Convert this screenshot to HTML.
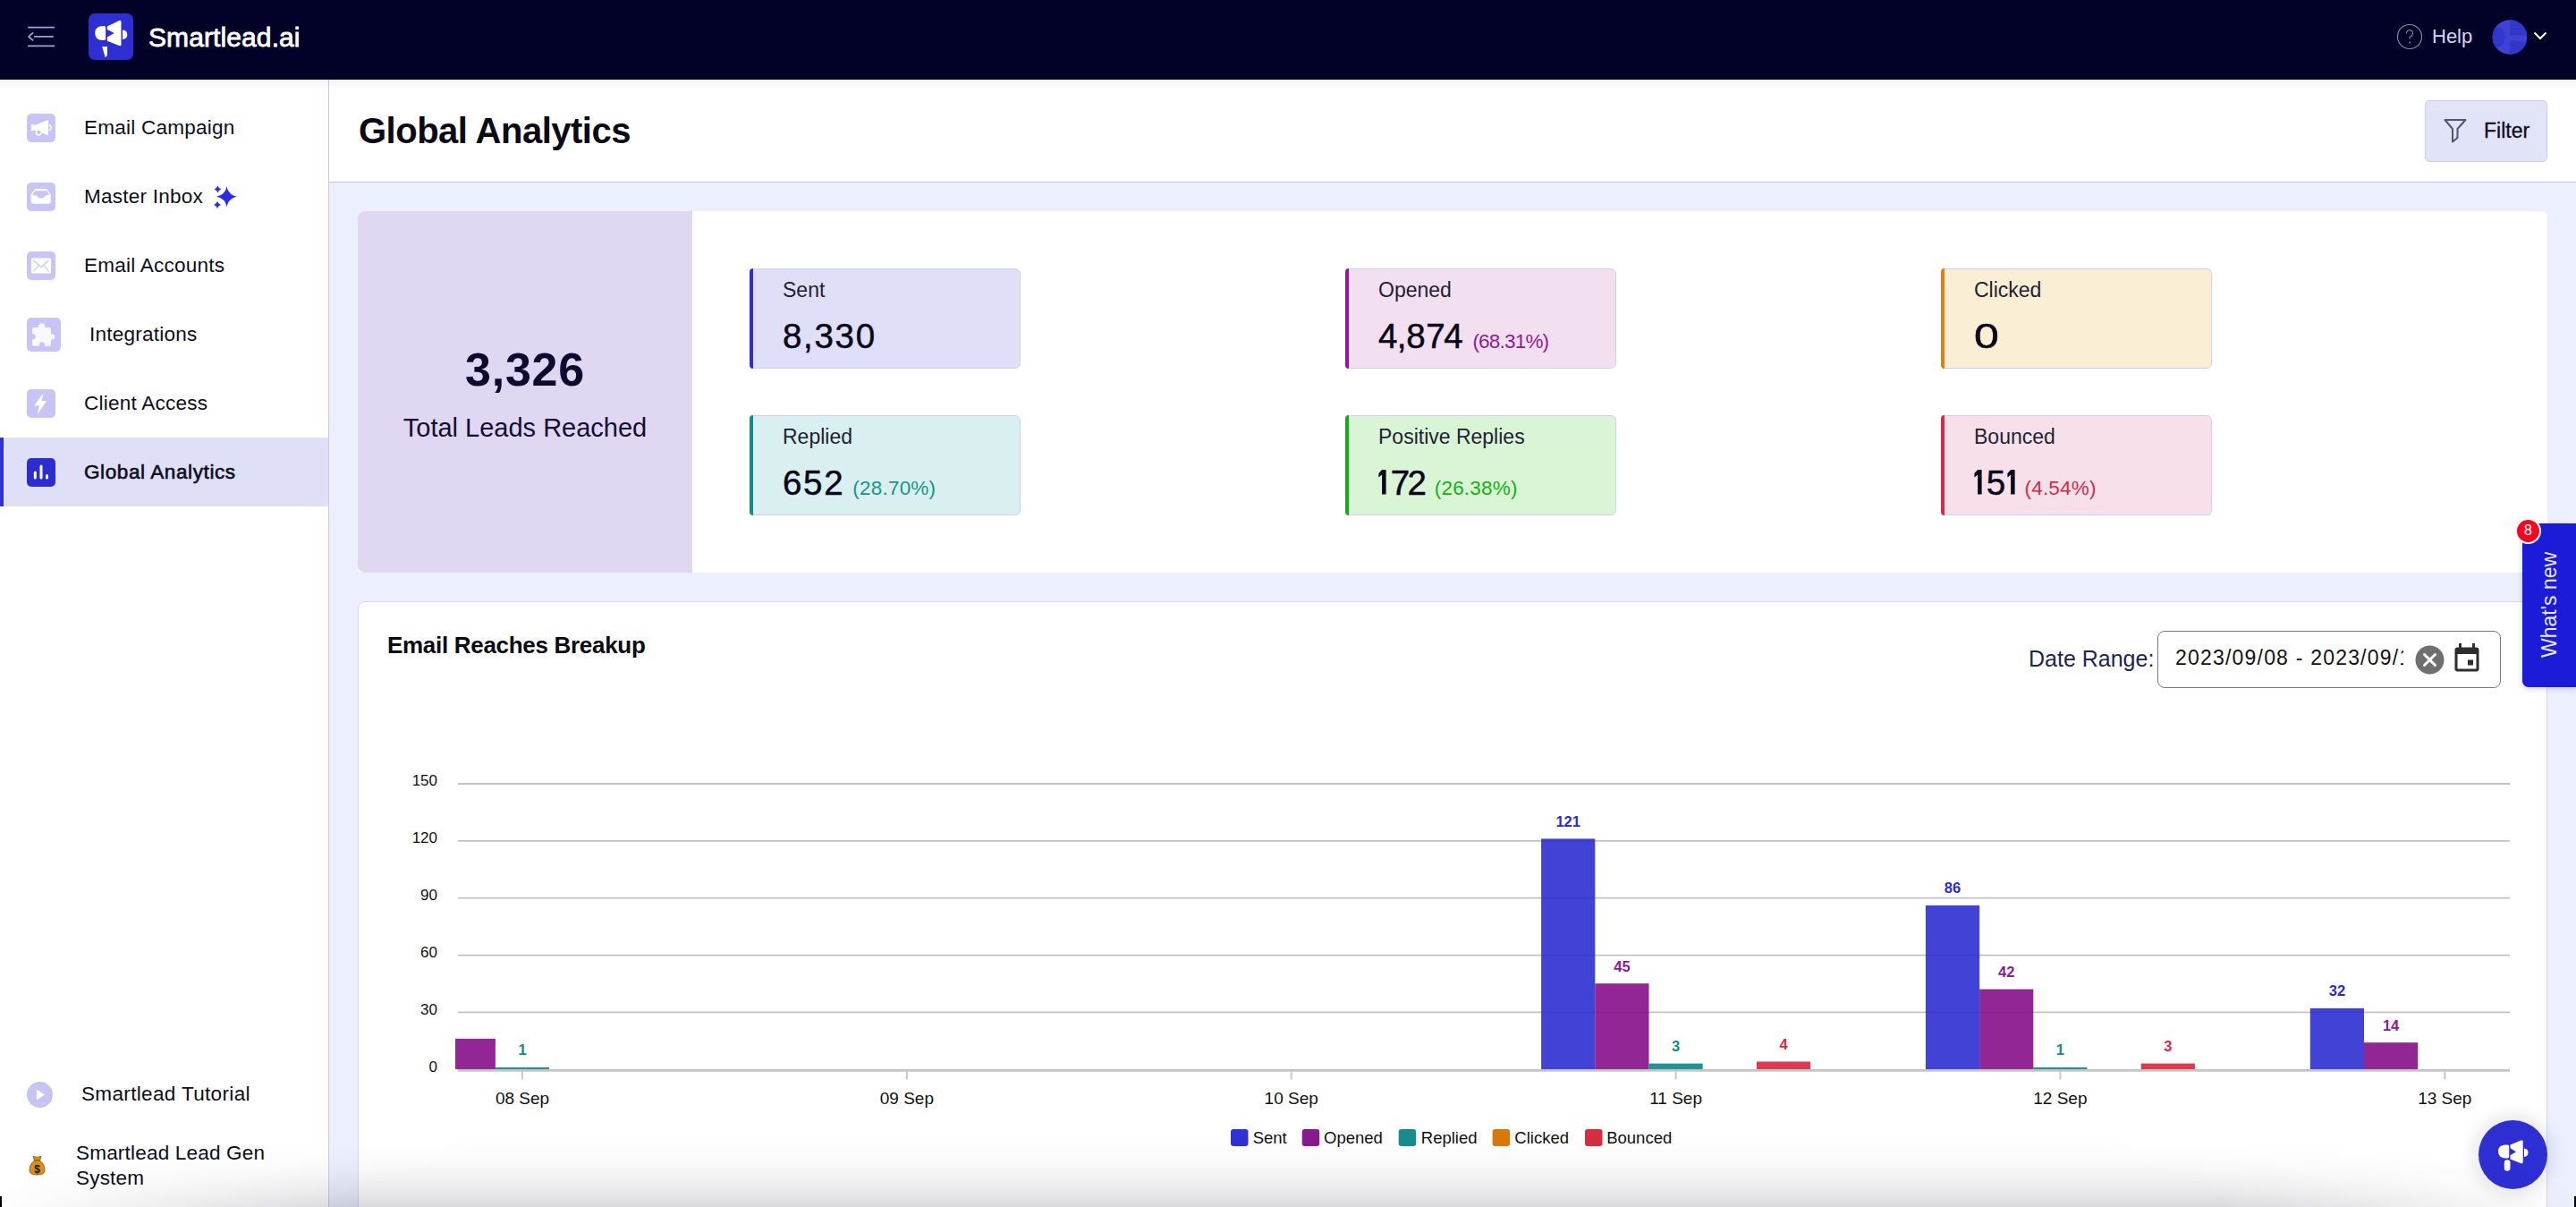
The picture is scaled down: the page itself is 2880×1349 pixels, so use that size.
<!DOCTYPE html>
<html><head><meta charset="utf-8">
<style>
*{box-sizing:border-box;margin:0;padding:0}
html,body{width:2880px;height:1349px;overflow:hidden}
body{position:relative;background:#eceffd;font-family:"Liberation Sans",sans-serif;color:#0c0c1a}
.abs{position:absolute}
#top{left:0;top:0;width:2880px;height:89px;background:#020228}
#side{left:0;top:89px;width:368px;height:1260px;background:#fff;border-right:1px solid #c8c8ec}
#hdr{left:368px;top:89px;width:2512px;height:115px;background:#fff;border-bottom:1px solid #c3c6e6}
.nav{position:absolute;left:0;width:367px;height:77px}
.nav .ic{position:absolute;left:30px;top:23px;width:32px;height:32px;border-radius:5px;background:#c7c5f5}
.nav .tx{position:absolute;left:94px;top:0;line-height:77px;font-size:22.5px;letter-spacing:0.25px;color:#0d0d1c;white-space:nowrap}
.nav.act{background:#dfe0f8;border-left:4px solid #3033d2}
.stat{position:absolute;width:303px;height:112px;border-radius:6px;border:1px solid #cfd0ee}
.stat .bar{position:absolute;left:-1px;top:-1px;bottom:-1px;width:4px;border-radius:6px 0 0 6px}
.stat .lb{position:absolute;left:36px;top:10px;font-size:23px;color:#1f1f33;white-space:nowrap}
.stat .val{position:absolute;left:36px;top:53px;font-size:38.5px;letter-spacing:1.7px;-webkit-text-stroke:0.5px #08081a;color:#08081a;white-space:nowrap}
.stat .one{display:inline-block;vertical-align:baseline;margin-right:1.7px;margin-bottom:-0.3px}
.stat .pc{font-size:22.5px;letter-spacing:0.2px;margin-left:9px;-webkit-text-stroke:0}
</style></head>
<body>
<!-- TOP BAR -->
<div id="top" class="abs">
  <svg class="abs" style="left:30px;top:28px" width="32" height="26" viewBox="0 0 32 26">
    <g stroke="#a29fd2" stroke-width="1.8" stroke-linecap="round" fill="none">
      <line x1="1.8" y1="2.6" x2="30.4" y2="2.6"/><line x1="8.8" y1="12.9" x2="29" y2="12.9"/><line x1="1.8" y1="23.4" x2="30.4" y2="23.4"/>
      <polyline points="6.6,8.9 2.1,12.9 6.6,16.9"/>
    </g>
  </svg>
  <div class="abs" style="left:99px;top:15px;width:50px;height:52px;border-radius:7px;background:#2e2fd2">
    <svg width="50" height="52" viewBox="0 0 50 52">
      <g fill="#fff">
        <path d="M19.1 15.6 Q19.1 13.9 17.3 13.9 L15.5 13.9 Q7.2 14.3 7.2 22 Q7.2 29.7 15.5 30.1 L17.3 30.1 Q19.1 30.1 19.1 28.3 Z"/>
        <path d="M20.85 14.6 L34.3 8.1 Q36.5 7.1 36.5 9.6 L36.5 34.4 Q36.5 36.9 34.3 36.1 L20.85 30.8 L20.85 26.4 L28.8 21.9 L20.85 18 Z"/>
        <path d="M38 18.4 Q43.3 18.9 43.3 23.7 Q43.3 28.5 38 29 Z"/>
        <path d="M15.2 37 L20.85 37 L20.85 46.6 Q20.6 48.6 18.6 49 Z"/>
      </g>
    </svg>
  </div>
  <div class="abs" style="left:166px;top:24.5px;font-size:30px;color:#fff;-webkit-text-stroke:0.8px #fff;letter-spacing:0.1px">Smartlead.ai</div>
  <svg class="abs" style="left:2679px;top:26px" width="30" height="30" viewBox="0 0 30 30">
    <circle cx="15" cy="15" r="13.5" stroke="#8e8cae" stroke-width="1.1" fill="none"/>
    <path d="M11.5 11.5 Q11.5 7.8 15 7.8 Q18.5 7.8 18.5 11.2 Q18.5 13.5 15.6 15 Q15 15.4 15 17.5" stroke="#8e8cae" stroke-width="1.1" fill="none"/>
    <circle cx="15" cy="21.5" r="0.9" fill="#8e8cae"/>
  </svg>
  <div class="abs" style="left:2719px;top:28px;font-size:22px;color:#d6d3f3">Help</div>
  <svg class="abs" style="left:2786px;top:22px" width="40" height="39" viewBox="0 0 40 39">
    <circle cx="20" cy="19.5" r="19.3" fill="#3e43d6"/>
    <path d="M20.3 0.2 A19.3 19.3 0 0 1 39.2 17.8 L20.3 17.3 Z" fill="#3336c8"/>
    <path d="M20.5 23 L38.6 25.6 A19.3 19.3 0 0 1 19 38.8 Z" fill="#3336c8"/>
    <path d="M3.5 9 Q7 8 10 9.5 Q14.5 12 14.5 19.5 Q14.5 27 10 29.5 Q7 31 3.5 30 A19.3 19.3 0 0 1 3.5 9 Z" fill="#3336c8"/>
  </svg>
  <svg class="abs" style="left:2832px;top:35px" width="16" height="10" viewBox="0 0 16 10">
    <polyline points="1.5,1.5 8,8 14.5,1.5" stroke="#fff" stroke-width="2" fill="none"/>
  </svg>
</div>

<!-- SIDEBAR -->
<div id="side" class="abs">
  <div class="nav" style="top:15px"><div class="ic">
    <svg width="32" height="32" viewBox="0 0 32 32">
      <path d="M5 12 L9.5 12.8 L23.3 7.3 L23.9 7.6 L23.9 24.2 L17.2 21.6 L9.3 18.6 L5 19.7 Z" fill="#fff"/>
      <path d="M24.4 12.6 Q27.2 13.4 27.2 15.8 Q27.2 18.2 24.4 19" stroke="#fff" stroke-width="1.3" fill="none"/>
      <circle cx="13.3" cy="21" r="2.9" stroke="#fff" stroke-width="1.5" fill="#c7c5f5"/>
    </svg>
  </div><div class="tx">Email Campaign</div></div>
  <div class="nav" style="top:92px"><div class="ic">
    <svg width="32" height="32" viewBox="0 0 32 32">
      <path d="M10.5 6.9 L20.7 6.9 Q22.3 6.9 23 8.3 L26.8 13.6 L26.8 20.8 Q26.8 23.8 23.8 23.8 L7.6 23.8 Q4.6 23.8 4.6 20.8 L4.6 13.6 L8.4 8.3 Q9.1 6.9 10.5 6.9 Z" fill="#fff"/>
      <path d="M9.6 9.25 L22.2 9.25 Q22.9 9.25 23.3 9.9 L25.2 13.9 L21.9 14.1 L18.3 17.2 Q17.9 17.5 17.3 17.5 L14.2 17.5 Q13.7 17.5 13.4 17.1 L10.9 14.4 L6.3 13.9 L8.4 9.9 Q8.8 9.25 9.6 9.25 Z" fill="#c7c5f5"/>
    </svg>
  </div><div class="tx">Master Inbox</div>
    <svg class="abs" style="left:237px;top:25px" width="32" height="30" viewBox="0 0 32 30"><g fill="#2b2be6">
      <path d="M16.5 2.1999999999999993 Q18.31 11.86 27.8 13.7 Q18.31 15.54 16.5 25.2 Q14.69 15.54 5.199999999999999 13.7 Q14.69 11.86 16.5 2.1999999999999993 Z"/>
      <path d="M6.4 1.2000000000000002 Q7.18 4.56 10.3 5.4 Q7.18 6.24 6.4 9.600000000000001 Q5.62 6.24 2.5000000000000004 5.4 Q5.62 4.56 6.4 1.2000000000000002 Z"/>
      <path d="M6.0 18.7 Q6.78 22.06 9.9 22.9 Q6.78 23.74 6.0 27.099999999999998 Q5.22 23.74 2.1 22.9 Q5.22 22.06 6.0 18.7 Z"/>
    </g></svg>
  </div>
  <div class="nav" style="top:169px"><div class="ic">
    <svg width="32" height="32" viewBox="0 0 32 32">
      <rect x="5" y="7.5" width="22" height="17" rx="1" fill="#fff"/>
      <polyline points="7.5,10 16,17.5 24.5,10" stroke="#c7c5f5" stroke-width="1.2" fill="none"/>
      <line x1="7.5" y1="22.5" x2="13" y2="15.5" stroke="#c7c5f5" stroke-width="1.2"/>
      <line x1="24.5" y1="22.5" x2="19" y2="15.5" stroke="#c7c5f5" stroke-width="1.2"/>
    </svg>
  </div><div class="tx">Email Accounts</div></div>
  <div class="nav" style="top:246px"><div class="ic" style="width:38px;height:38px;top:20px">
    <svg width="38" height="38" viewBox="0 0 38 38"><g fill="#f8f8fd">
      <path d="M8 10.9 L13.3 10.9 Q12.8 9.8 13.1 8.4 Q13.8 6.3 16.6 6.3 Q19.4 6.3 20.1 8.4 Q20.4 9.8 19.9 10.9 L25 10.9 Q26.9 10.9 26.9 12.8 L26.9 18.3 Q28 18.2 29.3 18.6 Q31.4 19.4 31.4 21.5 Q31.4 23.6 29.3 24.4 Q28 24.8 26.9 24.7 L26.9 29.9 Q26.9 31.8 25 31.8 L20 31.8 Q20.1 29.6 19.2 28.4 Q18.3 27.2 16.8 27.2 Q15.2 27.2 14.4 28.4 Q13.5 29.6 13.5 31.8 L8 31.8 Q6.1 31.8 6.1 29.9 L6.1 24.6 Q8 24.6 8.9 23.5 Q9.7 22.6 9.7 21.4 Q9.7 20.2 8.9 19.2 Q8 18.1 6.1 18.1 L6.1 12.8 Q6.1 10.9 8 10.9 Z"/>
    </g></svg>
  </div><div class="tx" style="left:100px">Integrations</div></div>
  <div class="nav" style="top:323px"><div class="ic">
    <svg width="32" height="32" viewBox="0 0 32 32">
      <path d="M18 5.5 L9 18 L14.5 18 L12.5 26.5 L21.5 13.5 L16 13.5 Z" fill="#fff" stroke="#fff" stroke-width="0.8" stroke-linejoin="round"/>
    </svg>
  </div><div class="tx">Client Access</div></div>
  <div class="nav act" style="top:400px"><div class="ic" style="background:#2b2dcf;left:26px">
    <svg width="32" height="32" viewBox="0 0 32 32"><g stroke="#fff" stroke-width="3" stroke-linecap="round">
      <line x1="9.3" y1="16" x2="9.3" y2="22"/><line x1="16" y1="9" x2="16" y2="22"/><line x1="22.5" y1="19.5" x2="22.5" y2="22"/>
    </g></svg>
  </div><div class="tx" style="left:90px;-webkit-text-stroke:0.6px #0d0d1c;letter-spacing:0.6px">Global Analytics</div></div>

  <div class="abs" style="left:30px;top:1120px;width:29px;height:29px;border-radius:50%;background:#c6c4f3">
    <svg width="29" height="29" viewBox="0 0 29 29"><path d="M11 8.5 L20 14.5 L11 20.5 Z" fill="#fff"/></svg>
  </div>
  <div class="abs" style="left:91px;top:1119px;font-size:22.5px;line-height:29px;letter-spacing:0.35px;color:#0d0d1c;white-space:nowrap">Smartlead Tutorial</div>
  <svg class="abs" style="left:32px;top:1202px" width="19" height="23" viewBox="0 0 19 23">
    <path d="M5 1.5 Q9.5 3 14 1.5 L12.5 6 Q18.5 11 18 17.5 Q17.5 22 9.5 22 Q1.5 22 1 17.5 Q0.5 11 6.5 6 Z" fill="#d4901a" stroke="#8a5208" stroke-width="0.8"/>
    <path d="M6.2 6 L12.8 6" stroke="#8a5208" stroke-width="1.2"/>
    <text x="9.5" y="19.5" font-family="Liberation Sans" font-weight="bold" font-size="12" text-anchor="middle" fill="#1c1408">$</text>
  </svg>
  <div class="abs" style="left:85px;top:1186px;width:280px;font-size:22.5px;line-height:28px;letter-spacing:0.2px;color:#0d0d1c">Smartlead Lead Gen<br>System</div>
</div>

<!-- HEADER -->
<div id="hdr" class="abs">
  <div class="abs" style="left:33px;top:35px;font-size:40px;font-weight:bold;color:#0a0a14;letter-spacing:-0.5px">Global Analytics</div>
  <div class="abs" style="left:2343px;top:23px;width:137px;height:69px;border-radius:5px;background:#e1e3f6;border:1px solid #c8cbf2">
    <svg class="abs" style="left:19.5px;top:19px" width="26" height="28" viewBox="0 0 26 28">
      <path d="M1.5 2 L24.5 2 L15.5 12 L15.5 22 L10 26.5 L10 12 Z" stroke="#54566e" stroke-width="2" fill="none" stroke-linejoin="round"/>
    </svg>
    <div class="abs" style="left:65px;top:19.5px;font-size:23px;color:#0c0c1c;-webkit-text-stroke:0.3px #0c0c1c">Filter</div>
  </div>
</div>

<!-- STATS -->
<div class="abs" style="left:400px;top:236px;width:2448px;height:404px;background:#fff;border-radius:6px"></div>
<div class="abs" style="left:400px;top:236px;width:374px;height:404px;background:#e0d7f2;border-radius:8px 0 0 8px"></div>
<div class="abs" style="left:400px;top:383px;width:374px;text-align:center;font-size:52px;font-weight:bold;color:#0d0a30;letter-spacing:0.8px">3,326</div>
<div class="abs" style="left:400px;top:462px;width:374px;text-align:center;font-size:29px;color:#120e36">Total Leads Reached</div>

<div class="stat" style="left:838px;top:300px;background:#e0dff9"><div class="bar" style="background:#2f2fd0"></div>
  <div class="lb">Sent</div><div class="val">8,330</div></div>
<div class="stat" style="left:838px;top:464px;background:#d9eff0"><div class="bar" style="background:#178c82"></div>
  <div class="lb">Replied</div><div class="val">652<span class="pc" style="color:#16978a">(28.70%)</span></div></div>
<div class="stat" style="left:1504px;top:300px;background:#f2dff0"><div class="bar" style="background:#8a1a98"></div>
  <div class="lb">Opened</div><div class="val"><span style="letter-spacing:-0.8px">4</span><span style="letter-spacing:0">,</span><span style="letter-spacing:0.4px">8</span><span style="letter-spacing:-1.3px">7</span>4<span class="pc" style="color:#8f1b9a;letter-spacing:-0.8px">(68.31%)</span></div></div>
<div class="stat" style="left:1504px;top:464px;background:#d9f5d6"><div class="bar" style="background:#1aa81a"></div>
  <div class="lb">Positive Replies</div><div class="val"><svg class="one" width="12" height="28" viewBox="0 0 12 28"><path d="M4.1 0 L8.6 0 L8.6 27.6 L4.1 27.6 L4.1 5.6 L0.4 8.6 L0.4 4 Z" fill="#08081a"/></svg><span style="letter-spacing:-2.5px">7</span>2<span class="pc" style="color:#15b015;margin-left:7px">(26.38%)</span></div></div>
<div class="stat" style="left:2170px;top:300px;background:#faefd5"><div class="bar" style="background:#d98010"></div>
  <div class="lb">Clicked</div><div class="val"><span style="display:inline-block;transform:scaleX(1.3);transform-origin:0 50%">0</span></div></div>
<div class="stat" style="left:2170px;top:464px;background:#f8e0ea"><div class="bar" style="background:#d42a48"></div>
  <div class="lb">Bounced</div><div class="val"><svg class="one" width="12" height="28" viewBox="0 0 12 28"><path d="M4.1 0 L8.6 0 L8.6 27.6 L4.1 27.6 L4.1 5.6 L0.4 8.6 L0.4 4 Z" fill="#08081a"/></svg>5<svg class="one" width="12" height="28" viewBox="0 0 12 28"><path d="M4.1 0 L8.6 0 L8.6 27.6 L4.1 27.6 L4.1 5.6 L0.4 8.6 L0.4 4 Z" fill="#08081a"/></svg><span class="pc" style="color:#d42a48;margin-left:6px">(4.54%)</span></div></div>

<!-- CHART CARD -->
<div id="chart" class="abs" style="left:400px;top:672px;width:2448px;height:720px;background:#fff;border:1px solid #d5d7ee;border-radius:8px">
  <div class="abs" style="left:32px;top:33px;font-size:26px;font-weight:bold;color:#0a0a14;letter-spacing:-0.3px">Email Reaches Breakup</div>
  <div class="abs" style="left:1867px;top:48.5px;font-size:25px;color:#1e2550">Date Range:</div>
  <div class="abs" style="left:2011px;top:32px;width:384px;height:64px;border:1px solid #7a7a7a;border-radius:8px;overflow:hidden">
    <div class="abs" style="left:19px;top:16px;width:255px;overflow:hidden;white-space:nowrap;font-size:23px;letter-spacing:1.2px;color:#111">2023/09/08 - 2023/09/13</div>
    <svg class="abs" style="left:287px;top:15px" width="33" height="33" viewBox="0 0 33 33">
      <circle cx="16.5" cy="16.5" r="16" fill="#6f6f6f"/>
      <path d="M10.5 10.5 L22.5 22.5 M22.5 10.5 L10.5 22.5" stroke="#fff" stroke-width="3" stroke-linecap="round"/>
    </svg>
    <svg class="abs" style="left:330px;top:12px" width="30" height="34" viewBox="0 0 30 34">
      <rect x="1.5" y="5.5" width="27" height="27" rx="3" fill="#2d2d2d"/>
      <rect x="4.5" y="13" width="21" height="16.5" fill="#fff"/>
      <rect x="16" y="19.5" width="6" height="6" fill="#2d2d2d"/>
      <rect x="6" y="1" width="3" height="6" fill="#2d2d2d"/><rect x="21" y="1" width="3" height="6" fill="#2d2d2d"/>
    </svg>
  </div>
  
</div>

<!-- CHARTSVG --><svg id="plot" class="abs" style="left:0;top:0" width="2880" height="1349" viewBox="0 0 2880 1349"><g stroke="#c2c2c2" stroke-width="1.8"><line x1="512" y1="876.0" x2="2806" y2="876.0"/><line x1="512" y1="939.9" x2="2806" y2="939.9"/><line x1="512" y1="1003.7" x2="2806" y2="1003.7"/><line x1="512" y1="1067.6" x2="2806" y2="1067.6"/><line x1="512" y1="1131.4" x2="2806" y2="1131.4"/></g><g font-family="Liberation Sans" font-size="17" fill="#111" text-anchor="end"><text x="489" y="878.4">150</text><text x="489" y="942.3">120</text><text x="489" y="1006.1">90</text><text x="489" y="1070.0">60</text><text x="489" y="1133.8">30</text><text x="489" y="1197.6">0</text></g><defs><clipPath id="pc"><rect x="509" y="700" width="2300" height="600"/></clipPath></defs><g clip-path="url(#pc)"><rect x="433.5" y="1154.6" width="60.2" height="40.4" fill="#2c2fd1" fill-opacity="0.9"/><rect x="493.7" y="1160.9" width="60.2" height="34.1" fill="#860e8a" fill-opacity="0.9"/><rect x="553.9" y="1192.9" width="60.2" height="2.1" fill="#078886" fill-opacity="0.9"/><rect x="1723.1" y="937.4" width="60.2" height="257.6" fill="#2c2fd1" fill-opacity="0.9"/><rect x="1783.3" y="1099.2" width="60.2" height="95.8" fill="#860e8a" fill-opacity="0.9"/><rect x="1843.5" y="1188.6" width="60.2" height="6.4" fill="#078886" fill-opacity="0.9"/><rect x="1963.9" y="1186.5" width="60.2" height="8.5" fill="#d7263c" fill-opacity="0.9"/><rect x="2152.9" y="1011.9" width="60.2" height="183.1" fill="#2c2fd1" fill-opacity="0.9"/><rect x="2213.1" y="1105.6" width="60.2" height="89.4" fill="#860e8a" fill-opacity="0.9"/><rect x="2273.3" y="1192.9" width="60.2" height="2.1" fill="#078886" fill-opacity="0.9"/><rect x="2393.7" y="1188.6" width="60.2" height="6.4" fill="#d7263c" fill-opacity="0.9"/><rect x="2582.8" y="1126.9" width="60.2" height="68.1" fill="#2c2fd1" fill-opacity="0.9"/><rect x="2643.0" y="1165.2" width="60.2" height="29.8" fill="#860e8a" fill-opacity="0.9"/></g><rect x="512" y="1195" width="2294" height="2.7" fill="#c4c4c4"/><g stroke="#c8c8c8" stroke-width="2"><line x1="584.0" y1="1197.5" x2="584.0" y2="1206.5"/><line x1="1013.9" y1="1197.5" x2="1013.9" y2="1206.5"/><line x1="1443.7" y1="1197.5" x2="1443.7" y2="1206.5"/><line x1="1873.6" y1="1197.5" x2="1873.6" y2="1206.5"/><line x1="2303.4" y1="1197.5" x2="2303.4" y2="1206.5"/><line x1="2733.3" y1="1197.5" x2="2733.3" y2="1206.5"/></g><g font-family="Liberation Sans" font-size="19" fill="#111" text-anchor="middle"><text x="584.0" y="1234.3">08 Sep</text><text x="1013.9" y="1234.3">09 Sep</text><text x="1443.7" y="1234.3">10 Sep</text><text x="1873.6" y="1234.3">11 Sep</text><text x="2303.4" y="1234.3">12 Sep</text><text x="2733.3" y="1234.3">13 Sep</text></g><g font-family="Liberation Sans" font-size="16.5" font-weight="bold" text-anchor="middle"><text x="584.0" y="1179.3" fill="#148a86">1</text><text x="1753.2" y="923.8" fill="#2a2ad2">121</text><text x="1813.4" y="1085.6" fill="#8c1a96">45</text><text x="1873.6" y="1175.0" fill="#148a86">3</text><text x="1994.0" y="1172.9" fill="#d42d44">4</text><text x="2183.0" y="998.3" fill="#2a2ad2">86</text><text x="2243.2" y="1092.0" fill="#8c1a96">42</text><text x="2303.4" y="1179.3" fill="#148a86">1</text><text x="2423.8" y="1175.0" fill="#d42d44">3</text><text x="2612.9" y="1113.3" fill="#2a2ad2">32</text><text x="2673.1" y="1151.6" fill="#8c1a96">14</text></g><g font-family="Liberation Sans" font-size="18.5" fill="#111"><rect x="1376" y="1262" width="19.5" height="19" rx="3" fill="#2f31d6"/><text x="1400.7" y="1277.8">Sent</text><rect x="1455.7" y="1262" width="19.5" height="19" rx="3" fill="#871a8c"/><text x="1480" y="1277.8">Opened</text><rect x="1563.7" y="1262" width="19.5" height="19" rx="3" fill="#178c88"/><text x="1588.8" y="1277.8">Replied</text><rect x="1668.6" y="1262" width="19.5" height="19" rx="3" fill="#d9780a"/><text x="1693.3" y="1277.8">Clicked</text><rect x="1772" y="1262" width="19.5" height="19" rx="3" fill="#d42d44"/><text x="1796.2" y="1277.8">Bounced</text></g></svg>
<!-- WHATS NEW -->
<div class="abs" style="left:2820px;top:585px;width:60px;height:183px;background:#1b1bd8;border-radius:0 0 0 7px;box-shadow:0 2px 6px rgba(0,0,40,0.18)">
  <div class="abs" style="left:30px;top:91px;width:0;height:0">
    <div style="position:absolute;left:-60px;top:-14px;width:120px;text-align:center;transform:rotate(-90deg);font-size:23px;line-height:28px;color:rgba(255,255,255,0.92);white-space:nowrap">What's new</div>
  </div>
</div>
<div class="abs" style="left:2812px;top:579px;width:29px;height:29px;border-radius:50%;background:#f5081f;border:2.5px solid #fff;color:#fff;font-size:16px;line-height:24px;text-align:center">8</div>
<!-- FAB -->
<div class="abs" style="left:2771px;top:1252px;width:77px;height:77px;border-radius:50%;background:#2e2fd2;box-shadow:0 0 18px 6px rgba(20,20,60,0.10)">
  <svg width="77" height="77" viewBox="0 0 77 77"><g fill="#fff">
    <path d="M34.2 29.5 Q34.2 27.4 32.4 27.4 L30.5 27.4 Q22 27.8 22 34.8 Q22 42 30.5 42.4 L32.4 42.4 Q34.2 42.4 34.2 40.4 Z"/>
    <path d="M35.5 27.6 L47.5 22.5 Q49.7 21.6 49.7 24 L49.7 46.5 Q49.7 49 47.5 48.2 L35.5 43.4 L35.5 39.2 L42 35.2 L35.5 31.2 Z"/>
    <path d="M51 31.5 Q55.5 32 55.5 36.2 Q55.5 40.4 51 40.9 Z"/>
    <rect x="28.8" y="44.2" width="6.7" height="12.5" rx="3.3"/>
  </g></svg>
</div>
<!-- bottom vignette -->
<div class="abs" style="left:0;top:1272px;width:2880px;height:77px;pointer-events:none;background:linear-gradient(rgba(30,30,45,0) 0%,rgba(30,30,45,0.02) 30%,rgba(30,30,45,0.055) 55%,rgba(30,30,45,0.10) 78%,rgba(30,30,45,0.17) 100%);-webkit-mask-image:radial-gradient(ellipse 1450px 150px at 50% 100%,#000 72%,rgba(0,0,0,0) 100%)"></div>
<div class="abs" style="left:0;top:1337px;width:2px;height:12px;background:#000"></div>
<div class="abs" style="left:2878px;top:1337px;width:2px;height:12px;background:#000"></div>
<!-- top bar shadow -->
<div class="abs" style="left:0;top:89px;width:2880px;height:11px;pointer-events:none;background:linear-gradient(rgba(20,20,50,0.05),rgba(20,20,50,0))"></div>

</body></html>
